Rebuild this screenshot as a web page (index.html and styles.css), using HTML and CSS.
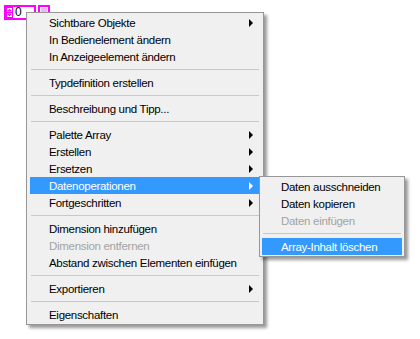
FILE: index.html
```html
<!DOCTYPE html>
<html lang="de">
<head>
  <meta charset="UTF-8" />
  <title>Array-Kontextmenü</title>
  <link rel="stylesheet" href="styles.css">
</head>
<body>

<div class="vi">
  <div class="array">
    <div class="index">
      <svg class="spin" width="7" height="11" viewBox="0 0 7 11">
        <rect x="0.5" y="0.5" width="6" height="10" fill="#fff" stroke="#ff00ff"/>
        <line x1="0" y1="5.5" x2="7" y2="5.5" stroke="#ff00ff"/>
        <path d="M3.5 1.5 L6 4.5 L1 4.5 Z" fill="#ff00ff"/>
        <path d="M1 6.5 L6 6.5 L3.5 9.5 Z" fill="#ff00ff"/>
      </svg>
      <span class="idx">0</span>
    </div>
    <div class="elem"><div class="elem-in"></div></div>
  </div>

  <ul class="menu main">
    <li class="item sub-arrow">Sichtbare Objekte</li>
    <li class="item">In Bedienelement ändern</li>
    <li class="item">In Anzeigeelement ändern</li>
    <li class="sep"></li>
    <li class="item">Typdefinition erstellen</li>
    <li class="sep"></li>
    <li class="item">Beschreibung und Tipp...</li>
    <li class="sep"></li>
    <li class="item sub-arrow">Palette Array</li>
    <li class="item sub-arrow">Erstellen</li>
    <li class="item sub-arrow">Ersetzen</li>
    <li class="item sub-arrow active">Datenoperationen</li>
    <li class="item sub-arrow">Fortgeschritten</li>
    <li class="sep"></li>
    <li class="item">Dimension hinzufügen</li>
    <li class="item disabled">Dimension entfernen</li>
    <li class="item">Abstand zwischen Elementen einfügen</li>
    <li class="sep"></li>
    <li class="item sub-arrow">Exportieren</li>
    <li class="sep"></li>
    <li class="item">Eigenschaften</li>
  </ul>

  <ul class="menu submenu">
    <li class="item">Daten ausschneiden</li>
    <li class="item">Daten kopieren</li>
    <li class="item disabled">Daten einfügen</li>
    <li class="sep"></li>
    <li class="item active">Array-Inhalt löschen</li>
  </ul>
</div>

</body>
</html>
```

FILE: styles.css
```css
body {
  margin: 0;
  background: #fff;
  font-family: 'Liberation Sans', Arial, sans-serif;
  font-size: 11.5px;
  letter-spacing: -0.3px;
  color: #000;
}

.vi {
  position: relative;
  width: 420px;
  height: 339px;
}

/* LabVIEW Array-Bedienelement */
.array {
  display: flex;
  gap: 2px;
  padding: 5px 0 0 4px;
}

.index {
  display: flex;
  align-items: center;
  gap: 2px;
  width: 32px;
  height: 15px;
  box-sizing: border-box;
  border: 2px solid #ff00ff;
  background: #fff;
}

.spin {
  display: block;
}

.idx {
  font-size: 12px;
  line-height: 11px;
  letter-spacing: 0;
}

.elem {
  width: 12px;
  height: 15px;
  box-sizing: border-box;
  border: 2px solid #ff00ff;
  padding: 1px;
  background: #fff;
}

.elem-in {
  height: 100%;
  background: #f3b5f3;
}

/* Kontextmenü */
.menu {
  position: absolute;
  margin: 0;
  padding: 1px 3px;
  list-style: none;
  box-sizing: border-box;
  background: #f0f0f0;
  border: 1px solid #979797;
  box-shadow: 3px 3px 3px rgba(0, 0, 0, 0.4);
}

.main {
  left: 26px;
  top: 12px;
  width: 238px;
}

.submenu {
  left: 259px;
  top: 176px;
  width: 146px;
  padding: 1px 2px;
}

.item {
  display: flex;
  align-items: center;
  justify-content: space-between;
  height: 17px;
  padding: 0 7px 0 19px;
  white-space: nowrap;
}

.sub-arrow::after {
  content: "";
  border-left: 4px solid #000;
  border-top: 4px solid transparent;
  border-bottom: 4px solid transparent;
}

.active {
  background: #3399ff;
  color: #fff;
}

.active.sub-arrow::after {
  border-left-color: #fff;
}

.disabled {
  color: #a3a3a3;
}

.sep {
  height: 1px;
  margin: 4px 1px;
  background: #c8c8c8;
}
```
